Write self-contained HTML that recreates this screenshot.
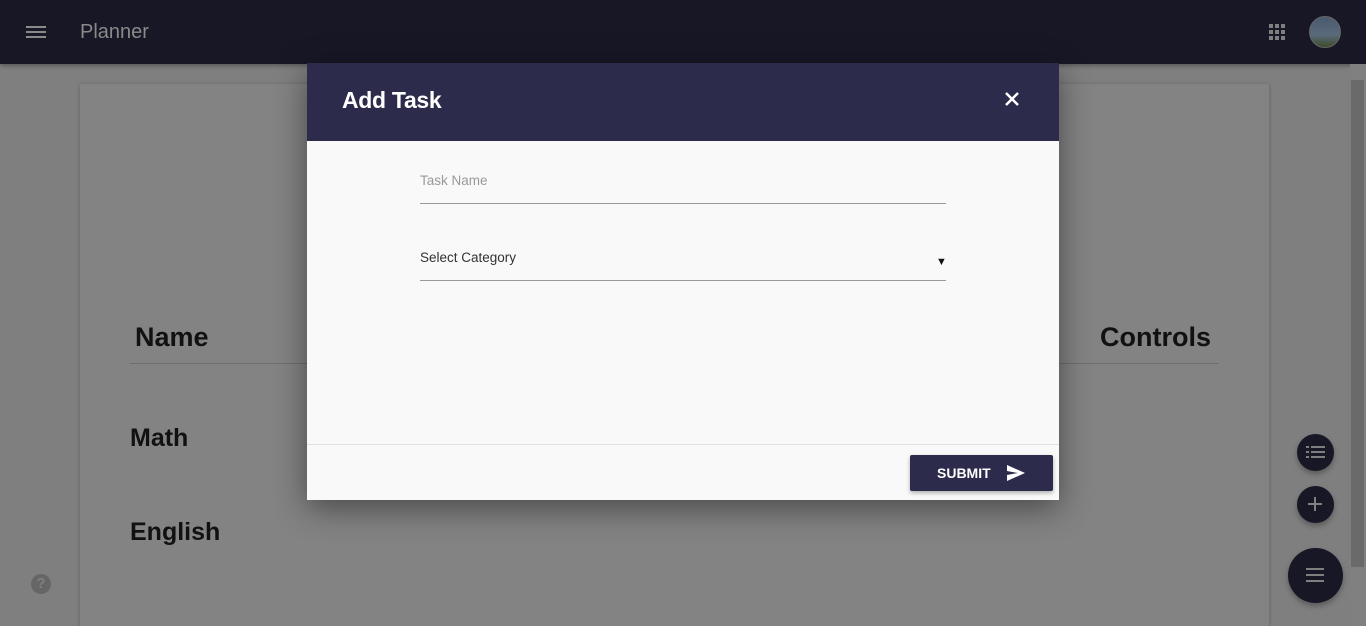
<!DOCTYPE html>
<html><head><style>
*{margin:0;padding:0;box-sizing:border-box}
html{width:1366px;height:626px;overflow:hidden}
body{width:1366px;height:626px;overflow:hidden;background:#7f7f7f;font-family:"Liberation Sans",Arial,sans-serif;position:relative}
.top{position:absolute;left:0;top:0;width:1366px;height:64px;background:#181726;box-shadow:0 2px 4px rgba(0,0,0,.3)}
.abs{position:absolute}
.card{position:absolute;left:80px;top:84px;width:1189px;height:542px;background:#838383;box-shadow:0 1px 4px rgba(0,0,0,.25);border-radius:2px}
.h{font-weight:bold;color:#111;position:absolute}
.fab{position:absolute;border-radius:50%;background:#181726;box-shadow:0 3px 6px rgba(0,0,0,.3)}
.modal{position:absolute;left:307px;top:63px;width:752px;height:437px;background:#f9f9f9;box-shadow:0 8px 30px rgba(0,0,0,.45)}
.mh{height:78px;background:#2c2b4c;position:relative}
</style></head><body>
<div class="top">
  <div class="abs" style="left:26px;top:26px;width:20px;height:2px;background:#8a8a8a;box-shadow:0 5px 0 #8a8a8a,0 10px 0 #8a8a8a"></div>
  <div class="abs" style="left:80px;top:21px;font-size:20px;color:#8a8a8a">Planner</div>
  <svg class="abs" style="left:1269px;top:24px" width="17" height="16" viewBox="0 0 17 16" fill="#7f7f7f"><rect x="0" y="0" width="4" height="4"/><rect x="6" y="0" width="4" height="4"/><rect x="12" y="0" width="4" height="4"/><rect x="0" y="6" width="4" height="4"/><rect x="6" y="6" width="4" height="4"/><rect x="12" y="6" width="4" height="4"/><rect x="0" y="12" width="4" height="4"/><rect x="6" y="12" width="4" height="4"/><rect x="12" y="12" width="4" height="4"/></svg>
  <div class="abs" style="left:1309px;top:16px;width:32px;height:32px;border-radius:50%;background:linear-gradient(#4a5a70,#5a6a7a 60%,#3d4a2a);border:1px solid #666"></div>
</div>
<div class="abs" style="left:1350px;top:64px;width:16px;height:562px;background:#808080"></div>
<div class="abs" style="left:1351px;top:80px;width:13px;height:487px;background:#6a6a6a"></div>
<div class="card"></div>
<div class="h" style="left:135px;top:322px;font-size:27px">Name</div>
<div class="h" style="left:1100px;top:322px;font-size:27px">Controls</div>
<div class="abs" style="left:130px;top:363px;width:1089px;height:1px;background:#6e6e6e"></div>
<div class="h" style="left:130px;top:424px;font-size:25px">Math</div>
<div class="h" style="left:130px;top:518px;font-size:25px">English</div>
<div class="abs" style="left:31px;top:574px;width:20px;height:20px;border-radius:50%;background:#666;color:#7f7f7f;font-size:15px;font-weight:bold;text-align:center;line-height:20px">?</div>
<div class="fab" style="left:1297px;top:434px;width:37px;height:37px"><svg style="position:absolute;left:9px;top:12px" width="19" height="14" fill="#7f7f7f"><rect x="0" y="0" width="3" height="2"/><rect x="5" y="0" width="14" height="2"/><rect x="0" y="5" width="3" height="2"/><rect x="5" y="5" width="14" height="2"/><rect x="0" y="10" width="3" height="2"/><rect x="5" y="10" width="14" height="2"/></svg></div>
<div class="fab" style="left:1297px;top:486px;width:37px;height:37px"><div class="abs" style="left:11px;top:17px;width:14px;height:2px;background:#7f7f7f"></div><div class="abs" style="left:17px;top:11px;width:2px;height:14px;background:#7f7f7f"></div></div>
<div class="fab" style="left:1288px;top:548px;width:55px;height:55px"><div class="abs" style="left:18px;top:20px;width:18px;height:2px;background:#7f7f7f;box-shadow:0 6px 0 #7f7f7f,0 12px 0 #7f7f7f"></div></div>
<div class="modal">
  <div class="mh">
    <div class="abs" style="left:35px;top:24px;font-size:23px;font-weight:bold;color:#fff;letter-spacing:-0.3px">Add Task</div>
    <svg class="abs" style="left:698px;top:29px" width="14" height="14"><path d="M1 1L13 13M13 1L1 13" stroke="#fff" stroke-width="2.5"/></svg>
  </div>
  <div class="abs" style="left:113px;top:110px;font-size:13.5px;color:#999">Task Name</div>
  <div class="abs" style="left:113px;top:140px;width:526px;height:1px;background:#999"></div>
  <div class="abs" style="left:113px;top:187px;font-size:13.5px;color:#333">Select Category</div>
  <div class="abs" style="left:629px;top:193px;font-size:11px;color:#111">▼</div>
  <div class="abs" style="left:113px;top:217px;width:526px;height:1px;background:#999"></div>
  <div class="abs" style="left:0;top:381px;width:752px;height:1px;background:#e2e2e2"></div>
  <div class="abs" style="left:603px;top:392px;width:143px;height:36px;background:#2c2b4c;border-radius:2px;box-shadow:0 2px 4px rgba(0,0,0,.3)">
    <div class="abs" style="left:27px;top:10px;font-size:14px;font-weight:bold;color:#fff">SUBMIT</div>
    <svg class="abs" style="left:97px;top:10px" width="18" height="16"><path d="M0 0L18 8L0 16L0 10L11 8L0 6Z" fill="#fff"/></svg>
  </div>
</div>
</body></html>
